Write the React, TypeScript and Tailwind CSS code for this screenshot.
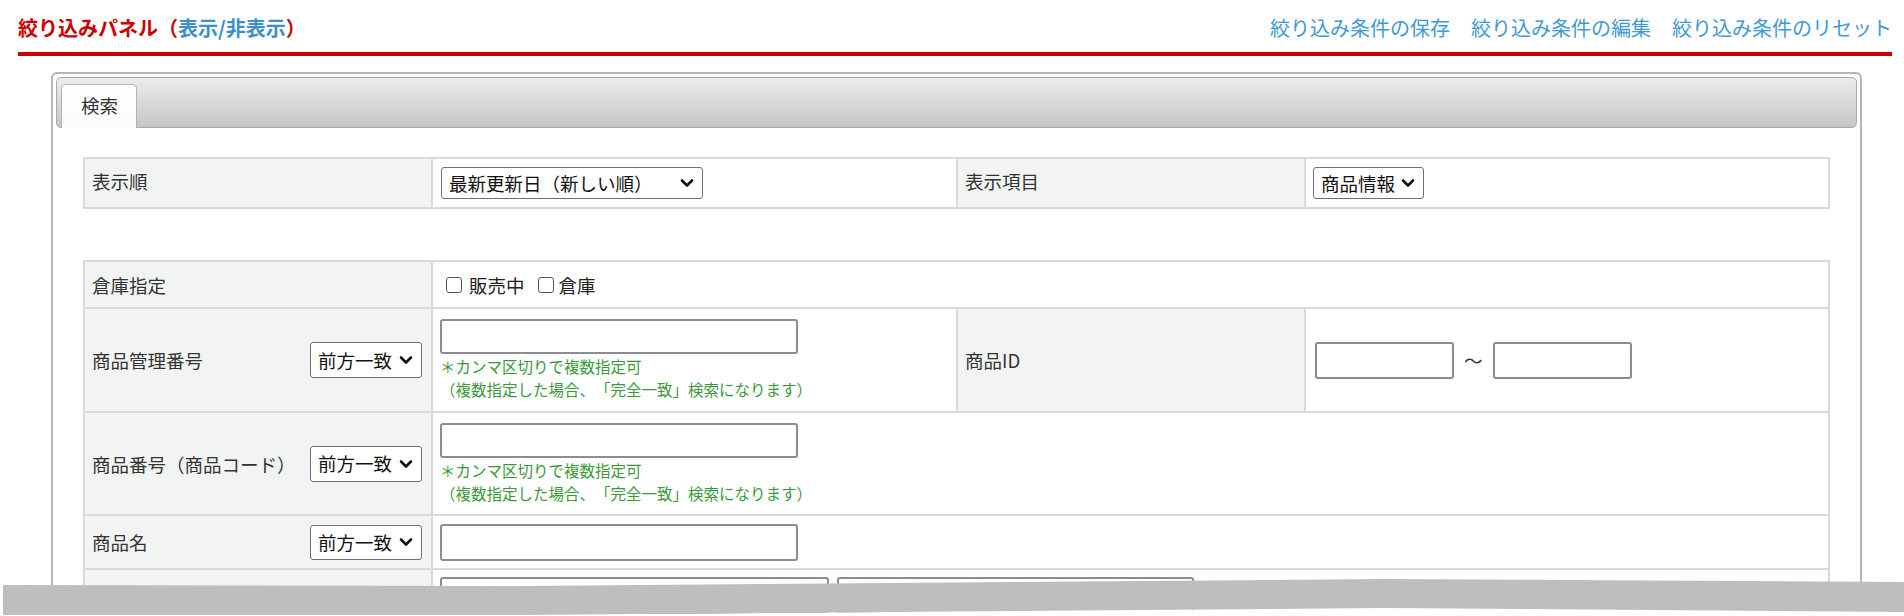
import { useState } from "react"

const font = "font-['Noto_Sans_CJK_JP','Noto_Sans',sans-serif] [text-spacing-trim:space-all]"

function Chevron() {
  return (
    <svg width="14" height="10" viewBox="0 0 14 10" className="pointer-events-none">
      <polyline points="2,2.5 7,7.5 12,2.5" fill="none" stroke="#111" strokeWidth="2.6" strokeLinecap="round" strokeLinejoin="round" />
    </svg>
  )
}

function Select({ value, width, height = 36 }: { value: string; width: number; height?: number }) {
  return (
    <div
      className="relative flex shrink-0 items-center rounded-[3px] border-[1.5px] border-[#707070] bg-white pl-[7px] pr-[8px] text-[18.5px] leading-none text-[#111]"
      style={{ width, height }}
    >
      <span className="flex-1 whitespace-nowrap">{value}</span>
      <Chevron />
    </div>
  )
}

function TextBox({ width, height = 35 }: { width: number; height?: number }) {
  return (
    <input
      type="text"
      className="shrink-0 rounded-[3px] border-2 border-[#8c8c8c] bg-white px-2 outline-none"
      style={{ width, height }}
    />
  )
}

function Note() {
  return (
    <div className="mt-[1px] text-[15.5px] leading-[23px] text-[#3a9a3a]">
      <div>＊カンマ区切りで複数指定可</div>
      <div>（複数指定した場合、「完全一致」検索になります）</div>
    </div>
  )
}

const label = "border-b-2 border-r-2 border-[#dadada] bg-[#f2f3f3] pl-[7px] text-[18.5px] leading-[24px] text-[#333]"
const value = "border-b-2 border-r-2 border-[#dadada] bg-white pl-[7px] text-[18.5px] leading-[24px] text-[#222]"

export default function App() {
  const [onSale, setOnSale] = useState(false)
  const [stock, setStock] = useState(false)

  return (
    <div className={`relative h-[616px] w-[1904px] overflow-hidden bg-white ${font}`}>
      {/* header */}
      <div className="flex h-[52px] items-start justify-between pl-[18px] pr-[12px] pt-[12px]">
        <div className="text-[20px] font-bold leading-[32px] text-[#cc0000]">
          絞り込みパネル（<span className="text-[#3c8fc8]">表示/非表示</span>）
        </div>
        <div className="flex gap-[21px] text-[20px] leading-[32px] text-[#3f9ad4]">
          <a>絞り込み条件の保存</a>
          <a>絞り込み条件の編集</a>
          <a>絞り込み条件のリセット</a>
        </div>
      </div>
      <div className="ml-[18px] h-[4px] w-[1874px] bg-[#cc0000]" />

      {/* panel */}
      <div className="ml-[51px] mt-[16px] w-[1811px] rounded-[6px] border-2 border-[#b4b4b4] px-[3px] pb-[40px] pt-[3px]">
        <div className="flex h-[51px] items-end rounded-[5px] border border-[#a9a9a9] bg-gradient-to-b from-[#ececec] to-[#c6c6c6] pl-[4px]">
          <div className="relative -mb-px h-[44px] w-[76px] rounded-t-[5px] border border-b-0 border-[#b5b5b5] bg-gradient-to-b from-white to-[#fbfbfb] pl-[19px] pt-[9px] text-[18.5px] leading-[22px] text-[#333]">
            検索
          </div>
        </div>

        {/* display settings */}
        <div className="ml-[27px] mt-[29px] grid w-[1747px] grid-cols-[348px_525px_348px_524px] border-l-2 border-t-2 border-[#dadada]">
          <div className={`${label} flex h-[50px] items-center pb-[4px]`}>表示順</div>
          <div className={`${value} flex h-[50px] items-center pl-[8px]`}>
            <Select value="最新更新日（新しい順）" width={262} height={32} />
          </div>
          <div className={`${label} flex h-[50px] items-center pb-[4px]`}>表示項目</div>
          <div className={`${value} flex h-[50px] items-center`}>
            <Select value="商品情報" width={111} height={32} />
          </div>
        </div>

        {/* conditions */}
        <div className="ml-[27px] mt-[51px] grid w-[1747px] grid-cols-[348px_525px_348px_524px] border-l-2 border-t-2 border-[#dadada]">
          <div className={`${label} flex h-[47px] items-center`}>倉庫指定</div>
          <div className={`${value} col-span-3 flex h-[47px] items-center`}>
            <input
              type="checkbox"
              checked={onSale}
              onChange={() => setOnSale(!onSale)}
              className="ml-[6px] mr-[7px] h-[16px] w-[16px] appearance-none rounded-[3px] border-[1.5px] border-[#555] bg-white"
            />
            販売中
            <input
              type="checkbox"
              checked={stock}
              onChange={() => setStock(!stock)}
              className="ml-[13px] mr-[5px] h-[16px] w-[16px] appearance-none rounded-[3px] border-[1.5px] border-[#555] bg-white"
            />
            倉庫
          </div>

          <div className={`${label} flex h-[104px] items-center justify-between pr-[9px]`}>
            商品管理番号
            <Select value="前方一致" width={112} />
          </div>
          <div className={`${value} flex h-[104px] flex-col justify-center`}>
            <TextBox width={358} />
            <Note />
          </div>
          <div className={`${label} flex h-[104px] items-center`}>商品ID</div>
          <div className={`${value} flex h-[104px] items-center pl-[9px]`}>
            <TextBox width={139} height={37} />
            <span className="mx-[10px] text-[#333]">～</span>
            <TextBox width={139} height={37} />
          </div>

          <div className={`${label} flex h-[103px] items-center justify-between pr-[9px]`}>
            商品番号（商品コード）
            <Select value="前方一致" width={112} />
          </div>
          <div className={`${value} col-span-3 flex h-[103px] flex-col items-start justify-center`}>
            <TextBox width={358} />
            <Note />
          </div>

          <div className={`${label} flex h-[54px] items-center justify-between pr-[9px]`}>
            商品名
            <Select value="前方一致" width={112} height={35} />
          </div>
          <div className={`${value} col-span-3 flex h-[54px] items-center`}>
            <TextBox width={358} height={37} />
          </div>

          <div className={`${label} h-[60px]`} />
          <div className={`${value} col-span-3 flex h-[60px] items-start gap-[8px] pt-[7px]`}>
            <TextBox width={389} height={37} />
            <TextBox width={357} height={37} />
          </div>
        </div>
      </div>

      {/* torn edge of the capture */}
      <svg className="absolute left-0 top-[575px]" width="1904" height="41" viewBox="0 0 1904 41">
        <polygon points="0,9 3,10 3,40 520,40 1384,33 1904,37 1904,41 0,41" fill="#ffffff" />
        <polygon points="3,10 520,11 1384,4 1904,7 1904,37 1384,33 520,40 3,40" fill="#bebebe" />
      </svg>
    </div>
  )
}
